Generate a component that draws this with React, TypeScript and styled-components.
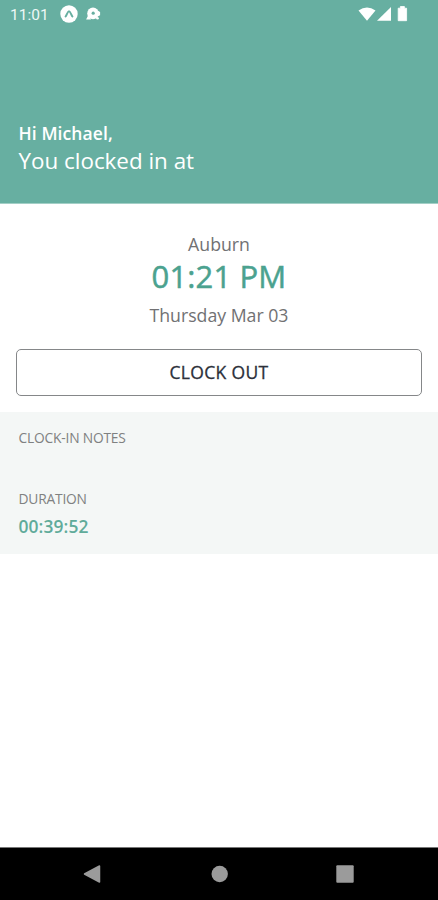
import React from 'react';
import styled, { createGlobalStyle } from 'styled-components';

const GlobalStyle = createGlobalStyle`
  * { box-sizing: border-box; }
  body { margin: 0; background: #fff; font-family: "Open Sans", "Noto Sans", sans-serif; }
`;

const Screen = styled.div`
  width: 438px;
  height: 900px;
  display: flex;
  flex-direction: column;
  overflow: hidden;
  background: #fff;
`;

const Header = styled.header`
  height: 204px;
  flex: none;
  display: flex;
  flex-direction: column;
  background: #67afa1;
  border-bottom: 1px solid #a3cfc6;
  color: #fff;
`;

const StatusBar = styled.div`
  height: 28px;
  padding: 0 28px 0 10px;
  display: flex;
  justify-content: space-between;
  align-items: center;
`;

const StatusGroup = styled.div`
  display: flex;
  align-items: center;
  svg { display: block; }
`;

const StatusTime = styled.span`
  width: 50px;
  font: 400 15.5px/20px Roboto, sans-serif;
  color: #eef8f6;
  padding-top: 1px;
`;

const BadgeRow = styled.div`
  display: flex;
  align-items: center;
  gap: 7px;
`;

const Greeting = styled.div`
  padding: 93px 18.5px 0;
`;

type LineProps = {
  $size: number;
  $height: number;
  $weight?: number;
  $color?: string;
  $spacing?: number;
  $stroke?: number;
};

const Line = styled.div<LineProps>`
  font-size: ${p => p.$size}px;
  line-height: ${p => p.$height}px;
  font-weight: ${p => p.$weight ?? 400};
  color: ${p => p.$color ?? 'inherit'};
  letter-spacing: ${p => p.$spacing ?? 0}px;
  -webkit-text-stroke: ${p => p.$stroke ?? 0}px currentColor;
  white-space: nowrap;
`;

const ClockPanel = styled.section`
  height: 208px;
  flex: none;
  padding: 28px 16px 0;
  text-align: center;
`;

const ClockOutButton = styled.button`
  display: block;
  width: 406px;
  height: 47px;
  margin-top: 16px;
  padding: 0 0 1px;
  border: 1px solid #858789;
  border-radius: 5px;
  background: #fff;
  color: #2c303a;
  font: 400 17.5px/24px "Open Sans", sans-serif;
  letter-spacing: 0.35px;
  -webkit-text-stroke: 0.3px currentColor;
`;

const Details = styled.section`
  height: 142px;
  flex: none;
  padding: 16px 18.5px 0;
  background: #f4f7f6;
`;

const Field = styled.div`
  height: 61px;
`;

const NavBar = styled.nav`
  height: 53px;
  margin-top: auto;
  padding: 0 84px 0 83px;
  display: flex;
  justify-content: space-between;
  align-items: center;
  border-top: 1px solid #777;
  background: #000;
  svg { display: block; }
`;

const AppBadge = () => (
  <svg width="18" height="18" viewBox="0 0 18 18">
    <circle cx="9" cy="9" r="8.7" fill="#fff" />
    <path d="M5.6 11.5C6.7 10 7.7 6.3 9 6.3s2.3 3.7 3.4 5.2" fill="none" stroke="#67afa1" strokeWidth="2" strokeLinecap="round" />
  </svg>
);

const ChatBadge = () => (
  <svg width="16" height="16" viewBox="0 0 16 16">
    <circle cx="8" cy="7.4" r="5.8" fill="#fff" />
    <path d="M3.6 8.5 1.1 13.4H6zM12.5 4.6l2.6 1.4v3.2l-2.6 1.2z" fill="#fff" />
    <circle cx="12.5" cy="12.3" r="1.3" fill="#fff" />
    <circle cx="8.2" cy="7.2" r="1.6" fill="#67afa1" />
  </svg>
);

const SystemIcons = () => (
  <svg width="52" height="18" viewBox="0 0 52 18">
    <path d="M0.5 5.5Q9-.7 17.5 5.5L9 15.7z" fill="#fff" />
    <path d="M19 15.7 33 2v13.7z" fill="#fff" />
    <path d="M40.2 3.2h2.2V1.5h4v1.7h2.2v12.5h-8.4z" fill="#fff" stroke="#fff" strokeWidth=".8" strokeLinejoin="round" />
  </svg>
);

export default function App() {
  return (
    <>
      <GlobalStyle />
      <Screen>
        <Header>
          <StatusBar>
            <StatusGroup>
              <StatusTime>11:01</StatusTime>
              <BadgeRow>
                <AppBadge />
                <ChatBadge />
              </BadgeRow>
            </StatusGroup>
            <SystemIcons />
          </StatusBar>
          <Greeting>
            <Line $size={17.5} $height={24} $weight={600} $spacing={0.1}>Hi Michael,</Line>
            <Line $size={22.4} $height={31}>You clocked in at</Line>
          </Greeting>
        </Header>
        <ClockPanel>
          <Line $size={17.7} $height={24} $color="#717173">Auburn</Line>
          <Line $size={31} $height={41} $color="#4ba28f" $stroke={0.5} $spacing={0.15}>01:21 PM</Line>
          <Line $size={17.7} $height={36} $color="#717173">Thursday Mar 03</Line>
          <ClockOutButton>CLOCK OUT</ClockOutButton>
        </ClockPanel>
        <Details>
          <Field>
            <Line $size={13.8} $height={20} $color="#7f8181" $spacing={-0.2}>CLOCK-IN NOTES</Line>
          </Field>
          <Field>
            <Line $size={13.8} $height={20} $color="#7f8181" $spacing={-0.2}>DURATION</Line>
            <Line $size={17.4} $height={35} $weight={600} $color="#60ab9a" $spacing={0.1}>00:39:52</Line>
          </Field>
        </Details>
        <NavBar>
          <svg width="18" height="18" viewBox="0 0 18 18">
            <path d="M1.5 9 16.5 1v16z" fill="#9b9b9b" stroke="#9b9b9b" strokeWidth="1.5" strokeLinejoin="round" />
          </svg>
          <svg width="18" height="18" viewBox="0 0 18 18">
            <circle cx="9.7" cy="9" r="8.2" fill="#9b9b9b" />
          </svg>
          <svg width="18" height="18" viewBox="0 0 18 18">
            <rect x=".3" y=".3" width="17.4" height="17.4" rx="1" fill="#9b9b9b" />
          </svg>
        </NavBar>
      </Screen>
    </>
  );
}
